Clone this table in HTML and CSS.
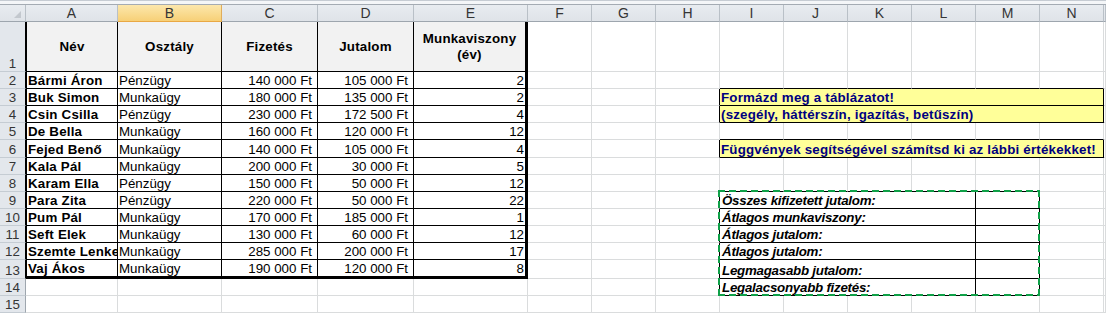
FILE: index.html
```html
<!DOCTYPE html>
<html lang="hu">
<head>
    <meta charset="UTF-8">
    <meta name="viewport" content="width=device-width, initial-scale=1.0">
    <title>Munkafüzet - Dolgozók</title>
    <link rel="stylesheet" href="styles.css">
</head>
<body>

<div class="sheet-wrap">
    <div class="topbar"></div>

    <table class="sheet">
        <colgroup>
            <col class="w-rh">
            <col class="w-a">
            <col class="w-b">
            <col class="w-c">
            <col class="w-d">
            <col class="w-e">
            <col class="w-std"><col class="w-std"><col class="w-std">
            <col class="w-std"><col class="w-std"><col class="w-std">
            <col class="w-std"><col class="w-std"><col class="w-std">
            <col class="w-rest">
        </colgroup>
        <thead>
            <tr>
                <th class="corner">
                    <svg width="7" height="7" viewBox="0 0 7 7"><polygon points="7,0 7,7 0,7" fill="#c3c8ce"/></svg>
                </th>
                <th>A</th>
                <th class="sel">B</th>
                <th>C</th>
                <th>D</th>
                <th>E</th>
                <th>F</th>
                <th>G</th>
                <th>H</th>
                <th>I</th>
                <th>J</th>
                <th>K</th>
                <th>L</th>
                <th>M</th>
                <th>N</th>
                <th></th>
            </tr>
        </thead>
        <tbody>
            <tr class="r1">
                <th class="rh edge">1</th>
                <td class="h first">Név</td>
                <td class="h">Osztály</td>
                <td class="h">Fizetés</td>
                <td class="h">Jutalom</td>
                <td class="h last">Munkaviszony<br>(év)</td>
                <td></td><td></td><td></td><td></td><td></td><td></td><td></td><td></td><td></td><td></td>
            </tr>
            <tr>
                <th class="rh edge">2</th>
                <td class="d first name">Bármi Áron</td>
                <td class="d">Pénzügy</td>
                <td class="d num">140 000 Ft</td>
                <td class="d num">105 000 Ft</td>
                <td class="d last yrs">2</td>
                <td></td><td></td><td></td>
                <td class="bb"></td><td class="bb"></td><td class="bb"></td><td class="bb"></td><td class="bb"></td><td class="bb"></td>
                <td></td>
            </tr>
            <tr>
                <th class="rh edge">3</th>
                <td class="d first name">Buk Simon</td>
                <td class="d">Munkaügy</td>
                <td class="d num">180 000 Ft</td>
                <td class="d num">135 000 Ft</td>
                <td class="d last yrs">2</td>
                <td></td><td></td><td class="br"></td>
                <td class="note" colspan="6">Formázd meg a táblázatot!</td>
                <td></td>
            </tr>
            <tr>
                <th class="rh edge">4</th>
                <td class="d first name">Csin Csilla</td>
                <td class="d">Pénzügy</td>
                <td class="d num">230 000 Ft</td>
                <td class="d num">172 500 Ft</td>
                <td class="d last yrs">4</td>
                <td></td><td></td><td class="br"></td>
                <td class="note" colspan="6">(szegély, háttérszín, igazítás, betűszín)</td>
                <td></td>
            </tr>
            <tr>
                <th class="rh edge">5</th>
                <td class="d first name">De Bella</td>
                <td class="d">Munkaügy</td>
                <td class="d num">160 000 Ft</td>
                <td class="d num">120 000 Ft</td>
                <td class="d last yrs">12</td>
                <td></td><td></td><td></td>
                <td class="bb"></td><td class="bb"></td><td class="bb"></td><td class="bb"></td><td class="bb"></td><td class="bb"></td>
                <td></td>
            </tr>
            <tr class="r6">
                <th class="rh edge">6</th>
                <td class="d first name">Fejed Benő</td>
                <td class="d">Munkaügy</td>
                <td class="d num">140 000 Ft</td>
                <td class="d num">105 000 Ft</td>
                <td class="d last yrs">4</td>
                <td></td><td></td><td class="br"></td>
                <td class="note" colspan="6">Függvények segítségével számítsd ki az lábbi értékekket!</td>
                <td></td>
            </tr>
            <tr>
                <th class="rh edge">7</th>
                <td class="d first name">Kala Pál</td>
                <td class="d">Munkaügy</td>
                <td class="d num">200 000 Ft</td>
                <td class="d num">30 000 Ft</td>
                <td class="d last yrs">5</td>
                <td></td><td></td><td></td><td></td><td></td><td></td><td></td><td></td><td></td><td></td>
            </tr>
            <tr>
                <th class="rh edge">8</th>
                <td class="d first name">Karam Ella</td>
                <td class="d">Pénzügy</td>
                <td class="d num">150 000 Ft</td>
                <td class="d num">50 000 Ft</td>
                <td class="d last yrs">12</td>
                <td></td><td></td><td></td>
                <td class="bb"></td><td class="bb"></td><td class="bb"></td><td class="bb"></td><td class="bb"></td>
                <td></td><td></td>
            </tr>
            <tr>
                <th class="rh edge">9</th>
                <td class="d first name">Para Zita</td>
                <td class="d">Pénzügy</td>
                <td class="d num">220 000 Ft</td>
                <td class="d num">50 000 Ft</td>
                <td class="d last yrs">22</td>
                <td></td><td></td><td class="br"></td>
                <td class="q" colspan="4">Összes kifizetett jutalom:</td>
                <td class="a"></td>
                <td></td><td></td>
            </tr>
            <tr>
                <th class="rh edge">10</th>
                <td class="d first name">Pum Pál</td>
                <td class="d">Munkaügy</td>
                <td class="d num">170 000 Ft</td>
                <td class="d num">185 000 Ft</td>
                <td class="d last yrs">1</td>
                <td></td><td></td><td class="br"></td>
                <td class="q" colspan="4">Átlagos munkaviszony:</td>
                <td class="a"></td>
                <td></td><td></td>
            </tr>
            <tr>
                <th class="rh edge">11</th>
                <td class="d first name">Seft Elek</td>
                <td class="d">Munkaügy</td>
                <td class="d num">130 000 Ft</td>
                <td class="d num">60 000 Ft</td>
                <td class="d last yrs">12</td>
                <td></td><td></td><td class="br"></td>
                <td class="q" colspan="4">Átlagos jutalom:</td>
                <td class="a"></td>
                <td></td><td></td>
            </tr>
            <tr>
                <th class="rh edge">12</th>
                <td class="d first name">Szemte Lenke</td>
                <td class="d">Munkaügy</td>
                <td class="d num">285 000 Ft</td>
                <td class="d num">200 000 Ft</td>
                <td class="d last yrs">17</td>
                <td></td><td></td><td class="br"></td>
                <td class="q" colspan="4">Átlagos jutalom:</td>
                <td class="a"></td>
                <td></td><td></td>
            </tr>
            <tr class="r13">
                <th class="rh edge">13</th>
                <td class="d first name">Vaj Ákos</td>
                <td class="d">Munkaügy</td>
                <td class="d num">190 000 Ft</td>
                <td class="d num">120 000 Ft</td>
                <td class="d last yrs">8</td>
                <td></td><td></td><td class="br"></td>
                <td class="q" colspan="4">Legmagasabb jutalom:</td>
                <td class="a"></td>
                <td></td><td></td>
            </tr>
            <tr>
                <th class="rh">14</th>
                <td></td><td></td><td></td><td></td><td></td>
                <td></td><td></td><td class="br"></td>
                <td class="q" colspan="4">Legalacsonyabb fizetés:</td>
                <td class="a"></td>
                <td></td><td></td>
            </tr>
            <tr>
                <th class="rh">15</th>
                <td></td><td></td><td></td><td></td><td></td>
                <td></td><td></td><td></td><td></td><td></td><td></td><td></td><td></td><td></td><td></td>
            </tr>
        </tbody>
    </table>

    <!-- másolási keret (I9:M14) -->
    <div class="marquee"></div>
</div>

</body>
</html>
```

FILE: styles.css
```css
/* Alap */
html, body {
    margin: 0;
    padding: 0;
    background-color: #ffffff;
    color: #000000;
    font-family: "Liberation Sans", Arial, sans-serif;
    font-size: 13.333px;
}

.sheet-wrap {
    position: relative;
    width: 1106px;
    height: 313px;
    overflow: hidden;
}

/* szerkesztőléc alja */
.topbar {
    height: 5px;
    box-sizing: border-box;
    background-color: #f4f6f8;
    border-top: 1px solid #c6ccd3;
    border-bottom: 1px solid #a4abb3;
}

/* Munkalap */
.sheet {
    border-collapse: separate;
    border-spacing: 0;
    table-layout: fixed;
    width: 1106px;
}

.w-rh { width: 26px; }
.w-a { width: 92px; }
.w-b { width: 104px; }
.w-c { width: 96px; }
.w-d { width: 96px; }
.w-e { width: 114px; }
.w-std { width: 64px; }
.w-rest { width: 2px; }

.sheet th,
.sheet td {
    box-sizing: border-box;
    padding: 0 1px;
    border-right: 1px solid #dadcdd;
    border-bottom: 1px solid #dadcdd;
    white-space: nowrap;
    overflow: hidden;
    vertical-align: bottom;
    line-height: 15px;
    font-weight: normal;
    text-align: left;
}

.sheet tbody tr { height: 17px; }
.sheet tbody tr.r1 { height: 50px; }
.sheet tbody tr.r6 { height: 18px; }
.sheet tbody tr.r13 { height: 19px; }

/* Oszlop- és sorfejlécek */
.sheet thead tr { height: 17px; }

.sheet thead th {
    background: linear-gradient(#e8ecf0, #dfe3e8);
    border-right: 1px solid #b9c0c7;
    border-bottom: 1px solid #9ea6ae;
    color: #353535;
    font-size: 14px;
    text-align: center;
    vertical-align: middle;
}

.sheet thead th.sel {
    background: linear-gradient(#fce7ac, #f7d077);
    border-right-color: #e0ad5b;
    border-bottom-color: #e9a844;
}

.sheet thead th.corner {
    text-align: right;
    vertical-align: bottom;
    padding: 0 4px 3px 0;
    line-height: 0;
}

.sheet th.rh {
    background: #e3e7ec;
    border-right: 1px solid #9ea6ae;
    border-bottom: 1px solid #c5ccd3;
    color: #353535;
    text-align: center;
    padding: 0;
}

.sheet th.rh.edge { border-right-color: #000000; }

/* Adattábla */
.sheet td.h {
    background-color: #f2f2f2;
    border-right-color: #000000;
    border-bottom-color: #000000;
    font-weight: bold;
    letter-spacing: 0.2px;
    text-align: center;
    vertical-align: middle;
    line-height: 16px;
}

.sheet td.d {
    border-right-color: #000000;
    border-bottom-color: #000000;
}

.sheet td.first { border-left: 1px solid #000000; }
.sheet td.last { border-right: 3px solid #000000; }
.sheet tr.r13 td.d { border-bottom: 3px solid #000000; }

.sheet td.name {
    font-weight: bold;
    letter-spacing: 0.2px;
}

.sheet td.num {
    text-align: right;
    padding-right: 5px;
}

.sheet td.yrs {
    text-align: right;
    padding-right: 1px;
}

/* Feladatok */
.sheet td.bb { border-bottom-color: #000000; }
.sheet td.br { border-right-color: #000000; }

.sheet td.note {
    background-color: #ffff99;
    border-right-color: #000000;
    border-bottom-color: #000000;
    color: #000080;
    font-weight: bold;
    letter-spacing: 0.2px;
}

.sheet td.q {
    border-right-color: #000000;
    border-bottom-color: #000000;
    font-weight: bold;
    font-style: italic;
    letter-spacing: -0.25px;
    padding-left: 2px;
}

.sheet td.a {
    border-right-color: #000000;
    border-bottom-color: #000000;
}

.marquee {
    position: absolute;
    left: 718px;
    top: 190px;
    width: 322px;
    height: 106px;
    pointer-events: none;
    background:
        repeating-linear-gradient(90deg, #0fa048 0 7px, transparent 7px 11px) left top / 100% 2px no-repeat,
        repeating-linear-gradient(90deg, #0fa048 0 7px, transparent 7px 11px) left bottom / 100% 2px no-repeat,
        repeating-linear-gradient(180deg, #0fa048 0 7px, transparent 7px 11px) left top / 2px 100% no-repeat,
        repeating-linear-gradient(180deg, #0fa048 0 7px, transparent 7px 11px) right top / 2px 100% no-repeat;
}
```
